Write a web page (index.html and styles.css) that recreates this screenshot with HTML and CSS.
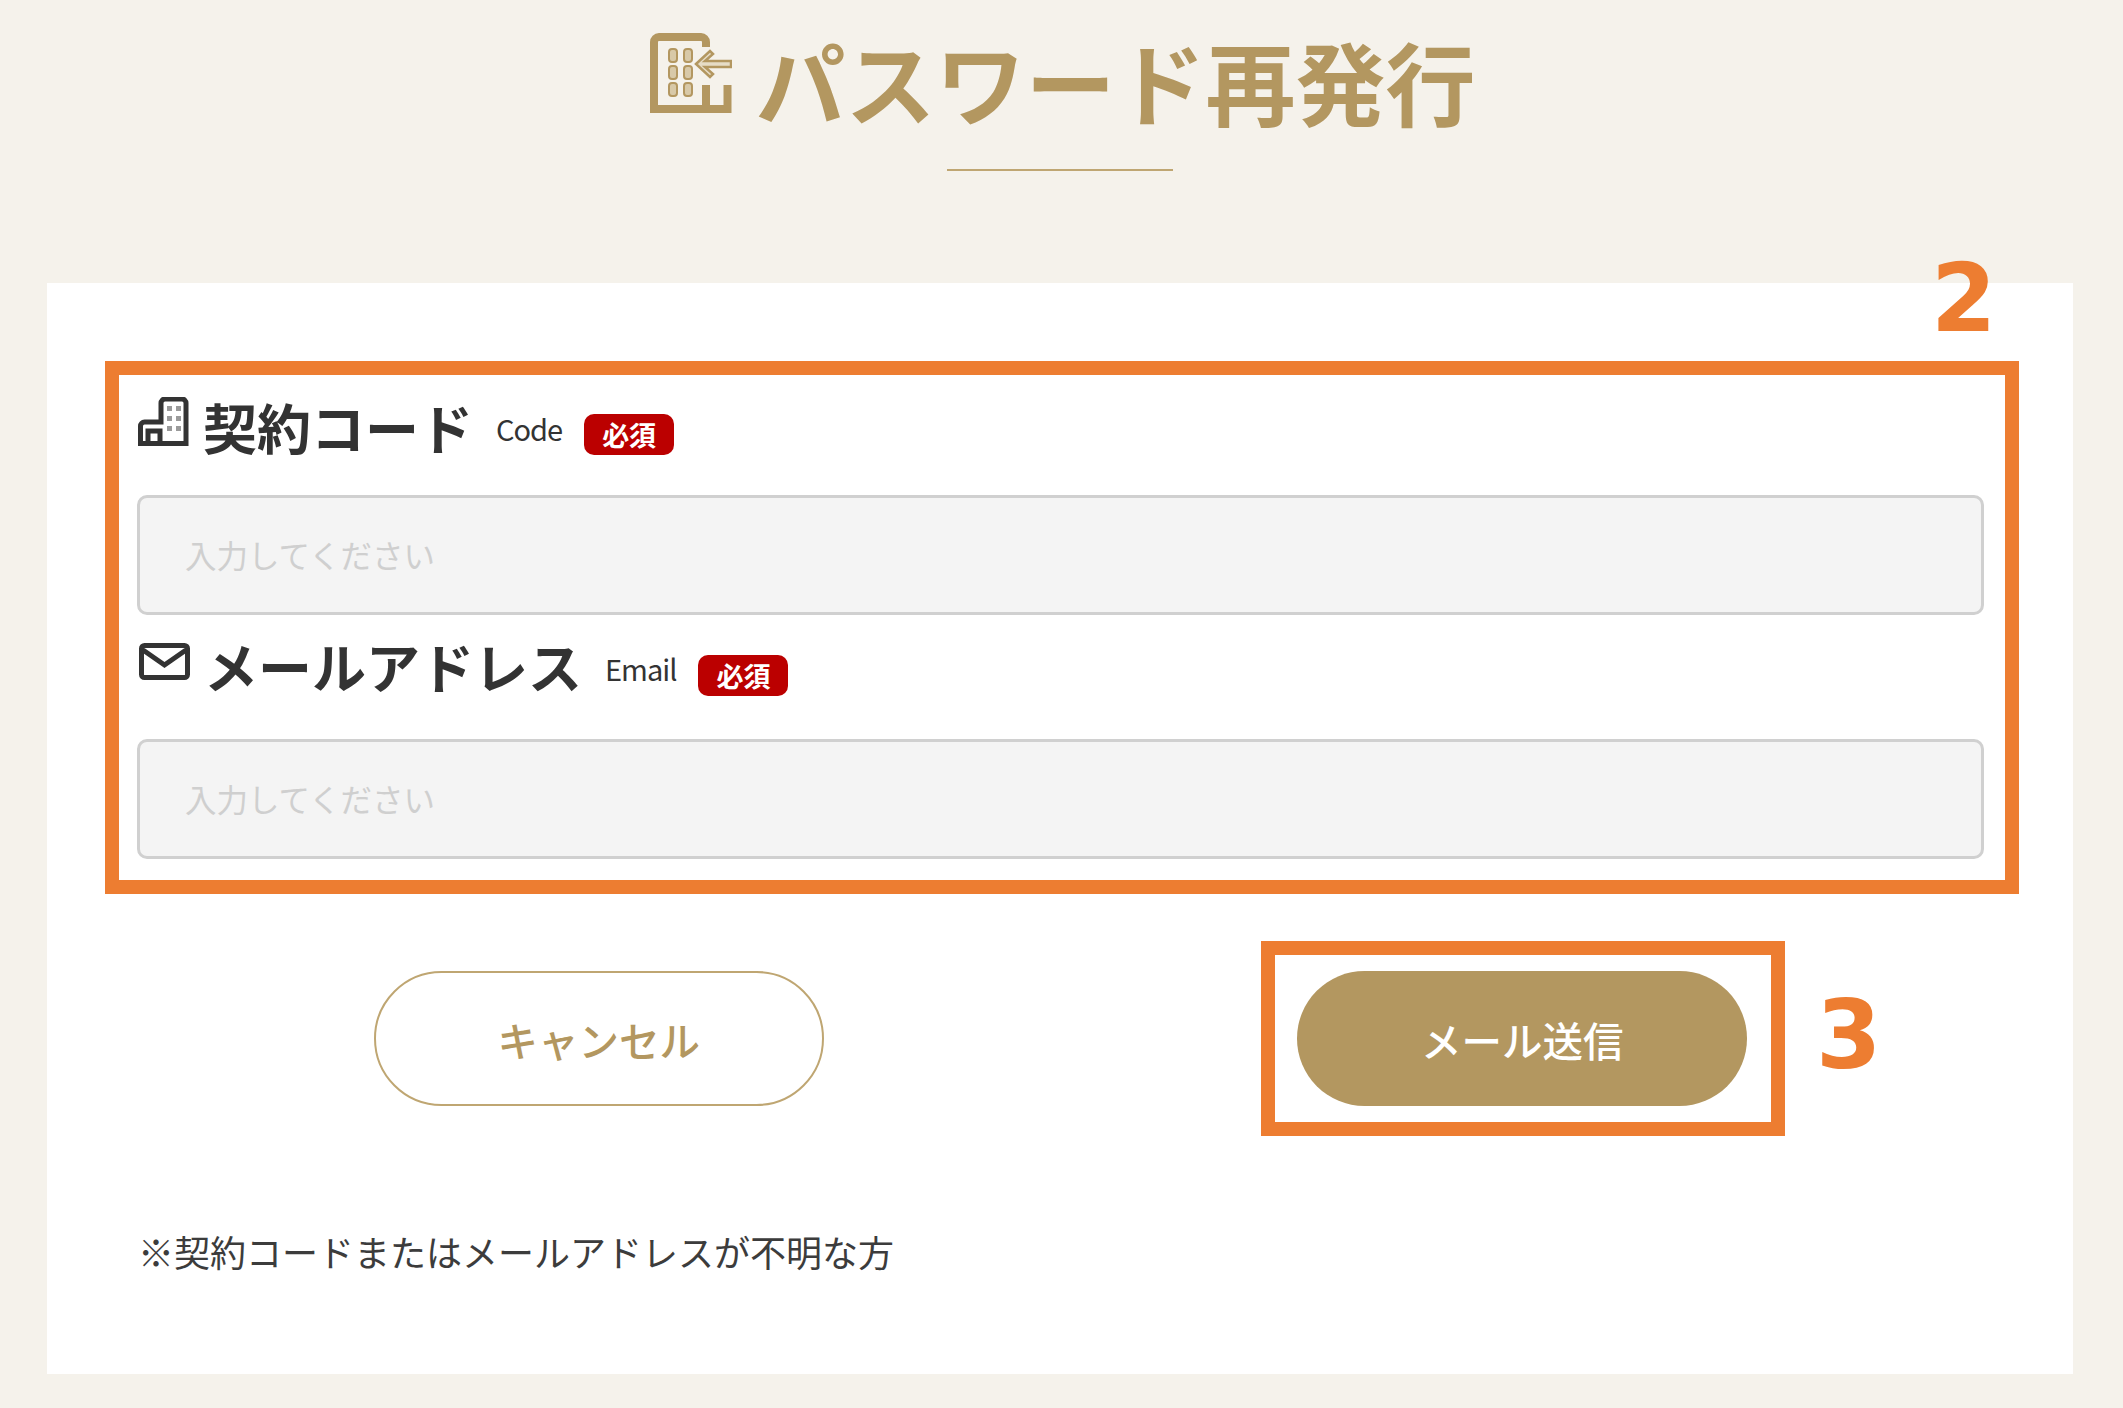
FILE: index.html
```html
<!DOCTYPE html>
<html lang="ja">
<head>
<meta charset="utf-8">
<title>パスワード再発行</title>
<link rel="stylesheet" href="styles.css">
</head>
<body>
<div class="page">
  <header class="head">
    <h1 class="title">
      <svg class="title-icon" viewBox="0 0 82 82" aria-hidden="true">
        <path class="ti-line" d="M56 14V9a5 5 0 0 0-5-5H9a5 5 0 0 0-5 5V76H77.500V52M56 52V76"/>
        <g class="ti-win">
          <rect x="19" y="16" width="8" height="13" rx="3"/><rect x="34" y="16" width="8" height="13" rx="3"/>
          <rect x="19" y="33" width="8" height="13" rx="3"/><rect x="34" y="33" width="8" height="13" rx="3"/>
          <rect x="19" y="50" width="8" height="13" rx="3"/><rect x="34" y="50" width="8" height="13" rx="3"/>
        </g>
        <path class="ti-arrow" d="M46 31L60 18L63 21L55 28H81V34H55L63 41L60 44Z"/>
      </svg>
      <span>パスワード再発行</span>
    </h1>
    <div class="rule"></div>
  </header>

  <main class="card">
    <div class="field">
      <div class="label">
        <svg class="label-icon" viewBox="0 0 51 49" aria-hidden="true">
          <path class="li-line" d="M2.500 46.500V29a4 4 0 0 1 4-4H23V6a4 4 0 0 1 4-4H44a4 4 0 0 1 4 4V46.500ZM10 46V34H22V46"/>
          <g class="li-win">
            <rect x="29" y="9" width="5" height="5"/><rect x="38" y="9" width="5" height="5"/>
            <rect x="29" y="19" width="5" height="5"/><rect x="38" y="19" width="5" height="5"/>
            <rect x="29" y="29" width="5" height="5"/><rect x="38" y="29" width="5" height="5"/>
          </g>
        </svg>
        <span class="label-text">契約コード</span>
        <span class="label-en">Code</span>
        <span class="badge">必須</span>
      </div>
      <input class="input" type="text" placeholder="入力してください">
    </div>
    <div class="field field-mail">
      <div class="label">
        <svg class="label-icon mail" viewBox="0 0 51 37" aria-hidden="true">
          <rect class="li-line" x="2.500" y="2.500" width="46" height="32" rx="3"/>
          <path class="li-line" d="M4 7L25.500 22L47 7"/>
        </svg>
        <span class="label-text">メールアドレス</span>
        <span class="label-en">Email</span>
        <span class="badge">必須</span>
      </div>
      <input class="input" type="text" placeholder="入力してください">
    </div>

    <div class="actions">
      <button class="btn btn-ghost" type="button">キャンセル</button>
      <button class="btn btn-solid" type="button">メール送信</button>
    </div>

    <p class="note">※契約コードまたはメールアドレスが不明な方</p>
  </main>

  <div class="mark mark-fields"></div>
  <div class="mark mark-send"></div>
  <div class="num num-2">2</div>
  <div class="num num-3">3</div>
</div>
</body>
</html>
```

FILE: styles.css
```css
* { box-sizing: border-box; }
html, body { margin: 0; padding: 0; }
body {
  background: #f5f2eb;
  font-family: "Noto Sans CJK JP", "Noto Sans", sans-serif;
  color: #333;
}
.page {
  position: relative;
  width: 2123px;
  height: 1408px;
  overflow: hidden;
  padding: 0 50px 0 47px;
}
.head {
  height: 283px;
  padding-top: 33px;
  display: flex;
  flex-direction: column;
  align-items: center;
}
.title {
  margin: 0 0 0 5px;
  height: 94px;
  display: flex;
  align-items: flex-start;
  gap: 24px;
  font-size: 90px;
  line-height: 94px;
  font-weight: 700;
  color: #b39760;
}
.title-icon { width: 82px; height: 82px; flex: none; }
.ti-line { fill: none; stroke: #b39760; stroke-width: 8; }
.ti-win rect { fill: #d8c9a8; stroke: #b39760; stroke-width: 2; }
.ti-arrow { fill: #e6dcc6; stroke: #b39760; stroke-width: 2.500; }
.rule {
  margin-top: 42px;
  width: 226px;
  height: 2px;
  background: #bfa672;
}
.card {
  background: #fff;
  height: 1091px;
  padding: 106px 89px 0 90px;
}
.field-mail { margin-top: 12px; }
.label {
  height: 78px;
  display: flex;
  align-items: center;
}
.label-icon { width: 51px; height: 49px; flex: none; margin: -14px 0 0 1px; }
.label-icon.mail { height: 37px; margin: -9px 0 0 2px; }
.li-line { fill: none; stroke: #333; stroke-width: 5; }
.li-win rect { fill: #9a9a9a; }
.label-text {
  margin: -2px 0 0 14px;
  font-size: 54px;
  line-height: 78px;
  font-weight: 700;
  color: #333;
}
.field-mail .label-text { margin-top: 0; }
.label-en {
  margin-left: 23px;
  font-size: 29px;
  line-height: 40px;
  letter-spacing: -1px;
  color: #333;
}
.field-mail .label-en { margin-top: 3px; }
.badge {
  margin: 13px 0 0 22px;
  width: 90px;
  height: 41px;
  border-radius: 10px;
  background: #bb0000;
  color: #fff;
  font-size: 27px;
  line-height: 41px;
  font-weight: 700;
  text-align: center;
}
.field-mail .badge { margin-top: 18px; }
.input {
  display: block;
  width: 100%;
  height: 120px;
  margin-top: 28px;
  padding: 0 45px 3px;
  border: 3px solid #d0d0d0;
  border-radius: 10px;
  background: #f4f4f4;
  font: 400 31.500px "Noto Sans CJK JP", sans-serif;
  color: #333;
  outline: none;
}
.field-mail .input { margin-top: 34px; }
.input::placeholder { color: #cfcfcf; opacity: 1; }
.actions {
  margin-top: 112px;
  display: grid;
  grid-template-columns: 1fr 1fr;
  justify-items: center;
}
.btn {
  width: 450px;
  height: 135px;
  border-radius: 68px;
  font: 500 40.500px "Noto Sans CJK JP", sans-serif;
  padding: 1px 0 0;
}
.btn-ghost { background: #fff; border: 2px solid #bfa672; color: #b39760; }
.btn-solid { background: #b39760; border: 0; color: #fff; }
.note {
  margin: 118px 0 0 1px;
  font-size: 36px;
  line-height: 54px;
  color: #3c3c3c;
}
.mark {
  position: absolute;
  border: 14px solid #ed7d31;
  pointer-events: none;
}
.mark-fields { left: 105px; top: 361px; width: 1914px; height: 533px; }
.mark-send { left: 1261px; top: 941px; width: 524px; height: 195px; }
.num {
  position: absolute;
  font-family: "DejaVu Sans", sans-serif;
  font-size: 94px;
  line-height: 96px;
  font-weight: 700;
  color: #ed7d31;
}
.num-2 { left: 1931px; top: 251px; }
.num-3 { left: 1816px; top: 988px; }
```
